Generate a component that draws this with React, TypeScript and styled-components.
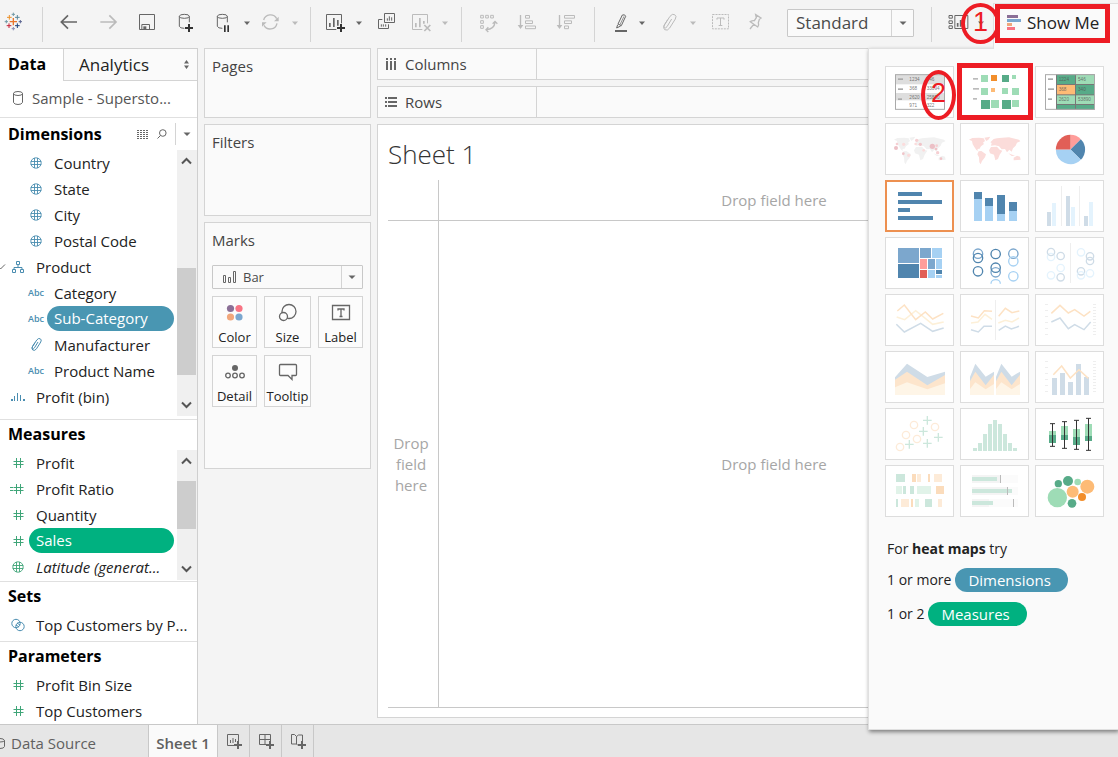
import React from "react";
import styled, { createGlobalStyle } from "styled-components";

const ink = "#666666";
const pale = "#bbbbbb";
const line = "#d4d4d4";
const teal = "#4a8db0";
const green = "#3fa578";
const pillBlue = "#4996b2";
const pillGreen = "#00b180";
const red = "#ed1c24";

const GlobalStyle = createGlobalStyle`
  *, *::before, *::after { box-sizing: border-box; }
  body {
    margin: 0;
    background: #f4f4f4;
    color: #222222;
    font-family: "Open Sans", "Noto Sans", sans-serif;
    font-size: 15px;
    font-weight: 400;
    line-height: 20px;
    overflow-x: hidden;
  }
  button, select { font: inherit; color: inherit; margin: 0; }
  button { background: none; border: 0; padding: 0; cursor: pointer; }
  h1, h2, ul, p { margin: 0; padding: 0; font-size: 15px; font-weight: inherit; }
  ul { list-style: none; }
  svg { display: block; flex: none; }
`;

/* ---------- page frame ---------- */

const Page = styled.div`
  display: flex;
  flex-direction: column;
  min-height: 100vh;
`;

const Toolbar = styled.header`
  position: relative;
  z-index: 2;
  display: flex;
  align-items: center;
  height: 48px;
`;

const Workspace = styled.main`
  position: relative;
  flex: 1;
  display: grid;
  grid-template-columns: 198px 167px minmax(0, 1fr);
  column-gap: 6px;
`;

/* ---------- toolbar ---------- */

const ToolGroup = styled.div<{ $gap: number; $start?: number; $end?: number }>`
  display: flex;
  align-items: center;
  gap: ${(p) => p.$gap}px;
  padding: 0 ${(p) => p.$end ?? 0}px 2px ${(p) => p.$start ?? 0}px;
`;

const Divider = styled.span`
  width: 1px;
  height: 35px;
  background: ${line};
`;

const ToolButton = styled.button<{ $gap?: number; $color?: string }>`
  display: flex;
  align-items: center;
  gap: ${(p) => p.$gap ?? 8}px;
  color: ${(p) => p.$color ?? ink};
`;

const SelectBox = styled.div`
  position: relative;
  width: 127px;
  margin: 0 17px 2px 20px;
  color: #4a4a4a;
`;

const SelectField = styled.select`
  display: block;
  appearance: none;
  width: 100%;
  height: 28px;
  padding: 0 30px 0 8px;
  border: 1px solid #c8c8c8;
  border-radius: 1px;
  background: #fafafa;
  font-size: 17px;
`;

const SelectCaret = styled.span<{ $w: number }>`
  position: absolute;
  top: 1px;
  right: 1px;
  bottom: 1px;
  width: ${(p) => p.$w}px;
  display: flex;
  align-items: center;
  justify-content: center;
  border-left: 1px solid ${line};
  color: ${ink};
  pointer-events: none;
`;

const ShowMeButton = styled.button`
  position: relative;
  align-self: flex-end;
  display: flex;
  align-items: center;
  gap: 5px;
  width: 125px;
  height: 46px;
  margin: 0 0 -1px auto;
  padding: 0 0 7px 13px;
  border: solid #e0e0e0;
  border-width: 1px 0 0 1px;
  background: #fafafa;
  font-size: 17px;
  white-space: nowrap;
`;

/* Red marks drawn over the interface */
const CalloutBox = styled.span<{ $inset: string }>`
  position: absolute;
  inset: ${(p) => p.$inset};
  border: 5px solid ${red};
  pointer-events: none;
`;

const CalloutRing = styled.span<{ $x: number; $y: number; $w: number; $h: number }>`
  position: absolute;
  z-index: 1;
  left: ${(p) => p.$x}px;
  top: ${(p) => p.$y}px;
  width: ${(p) => p.$w}px;
  height: ${(p) => p.$h}px;
  display: flex;
  align-items: center;
  justify-content: center;
  padding-bottom: 4px;
  border: 4px solid ${red};
  border-radius: 50%;
  color: ${red};
  font: 27px/30px "Liberation Sans", sans-serif;
  pointer-events: none;
`;

/* ---------- data pane ---------- */

const Sidebar = styled.aside`
  display: flex;
  flex-direction: column;
  border: solid #cfcfcf;
  border-width: 1px 1px 0 0;
  background: #ffffff;
`;

const TabRow = styled.div`
  display: flex;
  height: 32px;
`;

const DataTab = styled.button`
  width: 63px;
  padding: 0 0 2px 8px;
  text-align: left;
  font-size: 16px;
  font-weight: 700;
  color: #000000;
`;

const AnalyticsTab = styled.button`
  flex: 1;
  display: flex;
  align-items: center;
  justify-content: space-between;
  padding: 0 7px 0 15px;
  border: solid ${line};
  border-width: 0 0 1px 1px;
  background: #fafafa;
  font-size: 17px;
`;

const SourceRow = styled.button`
  display: flex;
  align-items: center;
  gap: 6px;
  height: 37px;
  padding: 0 0 2px 10px;
  border-bottom: 1px solid #e0e0e0;
  color: #555555;
`;

const Section = styled.section<{ $grow?: boolean }>`
  display: flex;
  flex-direction: column;
  flex: ${(p) => (p.$grow ? 1 : "none")};
  border-bottom: 1px solid #e0e0e0;
  &:last-child { border-bottom: 0; }
`;

const SectionHead = styled.div<{ $tall?: boolean }>`
  display: flex;
  align-items: center;
  height: ${(p) => (p.$tall ? 32 : 30)}px;
  padding: 0 0 ${(p) => (p.$tall ? 0 : 2)}px 8px;
`;

const SectionTitle = styled.h2`
  flex: 1;
  font-size: 16px;
  font-weight: 700;
  color: #000000;
`;

const HeadTools = styled.div`
  display: flex;
  align-items: center;
  gap: 8px;
  color: ${ink};
`;

const HeadMenu = styled.button`
  display: flex;
  align-items: center;
  justify-content: center;
  width: 22px;
  height: 22px;
  border-left: 1px solid ${line};
`;

const ListArea = styled.div<{ $end?: number; $grow?: boolean }>`
  display: flex;
  flex: ${(p) => (p.$grow ? 1 : "none")};
  margin-bottom: ${(p) => p.$end ?? 0}px;
`;

const FieldList = styled.ul`
  flex: 1;
  min-width: 0;
`;

const Field = styled.li<{ $level: number }>`
  position: relative;
  display: flex;
  align-items: center;
  height: 26px;
  padding-left: ${(p) => (p.$level === 2 ? 27 : 9)}px;
`;

const FieldIcon = styled.span<{ $tone: string }>`
  flex: none;
  display: flex;
  justify-content: center;
  width: 18px;
  color: ${(p) => p.$tone};
`;

const FieldName = styled.span`
  margin-left: 9px;
  white-space: nowrap;
`;

const ItalicName = styled(FieldName)`
  font-style: italic;
`;

const PillName = styled(FieldName)<{ $pill: string }>`
  flex: 1;
  align-self: flex-start;
  margin: 0 3px 0 2px;
  padding: 0 0 1px 7px;
  line-height: 24px;
  border-radius: 13px;
  background: ${(p) => p.$pill};
  color: #ffffff;
`;

const Twisty = styled.svg`
  position: absolute;
  left: 0;
  top: 10px;
`;

const Abc = styled.span`
  font: 600 9px/12px "Open Sans", sans-serif;
`;

const ScrollTrack = styled.div`
  display: flex;
  flex-direction: column;
  width: 20px;
  padding-right: 1px;
  background: #f0f0f0;
`;

const ScrollArrow = styled.button`
  display: flex;
  align-items: center;
  justify-content: center;
  height: 22px;
  color: #555555;
`;

const ScrollRail = styled.div<{ $before: number; $after: number }>`
  flex: 1;
  display: flex;
  padding: ${(p) => p.$before}px 0 ${(p) => p.$after}px;
`;

const ScrollThumb = styled.span`
  flex: 1;
  background: #cdcdcd;
`;

/* ---------- cards ---------- */

const CardColumn = styled.div`
  display: flex;
  flex-direction: column;
  gap: 6px;
`;

const Card = styled.section<{ $h: number }>`
  min-height: ${(p) => p.$h}px;
  padding: 7px;
  border: 1px solid ${line};
  background: #fafafa;
  color: #444444;
`;

const MarkSelect = styled.div`
  position: relative;
  margin: 15px 0 7px;
`;

const MarkSelectField = styled.select`
  display: block;
  appearance: none;
  width: 100%;
  height: 24px;
  padding: 0 24px 0 30px;
  border: 1px solid #c8c8c8;
  border-radius: 1px;
  background: #fafafa;
  color: #4a4a4a;
  font-size: 13px;
`;

const MarkSelectIcon = styled.svg`
  position: absolute;
  left: 11px;
  top: 5px;
  pointer-events: none;
`;

const MarkGrid = styled.div`
  display: grid;
  grid-template-columns: 45px 47px 45px;
  gap: 7px;
`;

const MarkButton = styled.button`
  display: flex;
  flex-direction: column;
  align-items: center;
  justify-content: space-between;
  height: 52px;
  padding: 6px 0 0;
  border: 1px solid ${line};
  background: #fcfcfc;
  font-size: 13px;
  color: #222222;
`;

/* ---------- shelves and sheet ---------- */

const Canvas = styled.div`
  display: flex;
  flex-direction: column;
  gap: 6px;
  padding-right: 8px;
  padding-bottom: 6px;
`;

const Shelf = styled.div`
  display: flex;
  height: 32px;
  border: 1px solid ${line};
  background: #fafafa;
`;

const ShelfLabel = styled.div`
  display: flex;
  align-items: center;
  gap: 8px;
  width: 159px;
  padding-left: 7px;
  border-right: 1px solid ${line};
  color: #444444;
`;

const Sheet = styled.section`
  flex: 1;
  display: flex;
  flex-direction: column;
  padding: 12px 0 9px 10px;
  border: 1px solid ${line};
  background: #ffffff;
`;

const SheetTitle = styled.h1`
  height: 43px;
  font-size: 26px;
  font-weight: 300;
  line-height: 34px;
  color: #333333;
`;

const DropGrid = styled.div`
  flex: 1;
  display: grid;
  grid-template-columns: 51px 1fr;
  grid-template-rows: 41px 1fr;
  border-bottom: 1px solid #c8c8c8;
`;

const DropCell = styled.div<{ $right?: boolean; $bottom?: boolean }>`
  display: flex;
  align-items: center;
  justify-content: center;
  padding-right: ${(p) => (p.$right ? 4 : 0)}px;
  border: solid #c8c8c8;
  border-width: 0 ${(p) => (p.$right ? 1 : 0)}px ${(p) => (p.$bottom ? 1 : 0)}px 0;
  color: #a6a6a6;
  font-size: 15px;
  line-height: 21px;
  text-align: center;
`;

/* ---------- show me panel ---------- */

const ShowMePanel = styled.aside`
  position: absolute;
  top: 0;
  right: 0;
  bottom: -6px;
  width: 250px;
  padding: 17px 14px 0 16px;
  border: 1px solid #e0e0e0;
  border-right: 0;
  background: #fafafa;
  box-shadow: 1px 2px 4px rgba(0, 0, 0, 0.45);
`;

const ChartGrid = styled.div`
  display: grid;
  grid-template-columns: repeat(3, 69px);
  gap: 5px 6px;
`;

const ChartTile = styled.button<{ $active?: boolean }>`
  position: relative;
  height: 52px;
  border: 1px solid #dddddd;
  background: #ffffff;
  outline: ${(p) => (p.$active ? "2px solid #ed9050" : "none")};
  outline-offset: -2px;
`;

const Hint = styled.p<{ $top?: number }>`
  display: flex;
  align-items: center;
  height: 24px;
  margin: ${(p) => p.$top ?? 10}px 0 0 2px;
  white-space: pre;
  font-size: 14px;
  strong { font-weight: 700; }
`;

const HintPill = styled.span<{ $color: string }>`
  margin-left: 4px;
  padding: 0 17px 0 13px;
  border-radius: 12px;
  background: ${(p) => p.$color};
  color: #ffffff;
  font-size: 15px;
  line-height: 24px;
`;

/* ---------- sheet tabs ---------- */

const SheetTabs = styled.nav`
  display: flex;
  height: 33px;
  border-top: 1px solid #c8c8c8;
  background: #e6e6e6;
`;

const SheetTab = styled.button<{ $w: number; $active?: boolean }>`
  display: flex;
  align-items: center;
  justify-content: ${(p) => (p.$w > 100 ? "flex-start" : "center")};
  gap: 5px;
  width: ${(p) => p.$w}px;
  padding-top: ${(p) => (p.$w > 40 ? 3 : 0)}px;
  border-right: 1px solid #c8c8c8;
  background: ${(p) => (p.$active ? "#fafafa" : "transparent")};
  color: #606060;
  font-weight: ${(p) => (p.$active ? 600 : 400)};
  white-space: nowrap;
`;

/* ---------- icons ---------- */

const Caret = ({ size = 6 }: { size?: number }) => (
  <svg width="8" height="8" viewBox="0 0 8 8">
    <path d={`M${4 - size / 2} 2.5h${size}L4 6z`} fill="currentColor" />
  </svg>
);

const ToolIcon = ({ children }: { children: React.ReactNode }) => (
  <svg width="24" height="24" viewBox="0 0 72 72" fill="none" stroke="currentColor" strokeWidth="3">
    {children}
  </svg>
);

const plus = (x: number, y: number, r: number) => `M${x - r} ${y}h${2 * r}M${x} ${y - r}v${2 * r}`;

const Logo = () => (
  <ToolIcon>
    <path d={plus(37, 32, 11)} stroke="#e8762d" strokeWidth="4" />
    <path d={plus(25, 19, 7)} stroke="#eb9129" />
    <path d={plus(49, 19, 7)} stroke="#5b879b" />
    <path d={plus(24, 44, 7)} stroke="#c72037" />
    <path d={plus(49, 44, 7)} stroke="#1f447e" />
    <path d={plus(16, 32, 5)} stroke="#7099a6" />
    <path d={plus(58, 32, 5)} stroke="#5c6692" />
    <path d={plus(37, 10, 5)} stroke="#7099a6" />
    <path d={plus(37, 53, 5)} stroke="#8a8fb5" />
  </ToolIcon>
);

const BackIcon = () => (
  <ToolIcon><path d="M60 33H14M33 13 13 33l20 20" strokeWidth="5" /></ToolIcon>
);
const ForwardIcon = () => (
  <ToolIcon><path d="M13 33h46M40 13l20 20-20 20" strokeWidth="5" /></ToolIcon>
);
const SaveIcon = () => (
  <ToolIcon>
    <path d="M13.500 10.500h45v45h-45zM20.500 55V40.500h23V55" />
    <path d="M25 46h9v9h-9z" fill="currentColor" stroke="none" />
  </ToolIcon>
);
const DbAddIcon = () => (
  <ToolIcon>
    <ellipse cx="31" cy="16" rx="15" ry="6" />
    <path d="M16 16v30q2 6 15 6M46 16v18" />
    <path d={plus(45, 51, 12)} stroke="#333" strokeWidth="6" />
  </ToolIcon>
);
const DbPauseIcon = () => (
  <ToolIcon>
    <ellipse cx="34" cy="16" rx="15" ry="6" />
    <path d="M19 16v30q2 6 15 6M49 16v18" />
    <path d="M41.500 43v20M51.500 43v20" stroke="#333" strokeWidth="5" />
  </ToolIcon>
);
const RefreshIcon = () => (
  <ToolIcon>
    <path d="M14 27A21 21 0 0 1 53 23M54 37A21 21 0 0 1 15 43" strokeWidth="4" />
    <path d="M59 17v14H45zM9 47V34h14z" fill="currentColor" stroke="none" />
  </ToolIcon>
);
const NewSheetIcon = () => (
  <ToolIcon>
    <path d="M40 55.500H10.500v-45h45V37" />
    <path d="M20.500 36v12M32.500 21v27M44.500 27v17" strokeWidth="5" />
    <path d={plus(54, 51, 12)} stroke="#333" strokeWidth="6" />
  </ToolIcon>
);
const DuplicateIcon = () => (
  <ToolIcon>
    <path d="M31.500 7.500h30v27h-30zM25 25.500H13.500v27h30V40" />
    <path d="M40 29v-7M46 29V16M53 29V19M22 47v-7M28 47v-7M35 47v-7" />
  </ToolIcon>
);
const ClearIcon = () => (
  <ToolIcon>
    <path d="M40 55.500H10.500v-45h45V37" />
    <path d="M20.500 36v13M32.500 21v28M44.500 30v8" strokeWidth="5" />
    <path d="m46 42 18 18M64 42 46 60" strokeWidth="5" />
  </ToolIcon>
);
const SwapIcon = () => (
  <ToolIcon>
    <path d="M14 13h8v8h-8zM29 13h8v8h-8zM44 13h8v8h-8zM14 29h8v8h-8zM14 44h8v8h-8z" />
    <path d="M57 34q-2 20-26 22M50 38l7-7 7 7M37 49l-7 7 7 7" strokeWidth="4" />
  </ToolIcon>
);
const SortAscIcon = () => (
  <ToolIcon>
    <path d="M16.500 12v36" strokeWidth="4" />
    <path d="M31.500 13.500h12v8h-12zM31.500 29.500h21v8h-21zM31.500 45h30v8h-30z" />
    <path d="M8 42h17l-8.500 12z" fill="currentColor" stroke="none" />
  </ToolIcon>
);
const SortDescIcon = () => (
  <ToolIcon>
    <path d="M16.500 12v36" strokeWidth="4" />
    <path d="M31.500 13.500h30v8h-30zM31.500 29.500h21v8h-21zM31.500 45h12v8h-12z" />
    <path d="M8 42h17l-8.500 12z" fill="currentColor" stroke="none" />
  </ToolIcon>
);
const HighlightIcon = () => (
  <ToolIcon>
    <path d="M37 12q8-3 10 4L34 44l-10-5zM23 41l-3 10 12-6" />
    <path d="M42 16 30 41" strokeWidth="2" />
    <path d="M15 60h36" strokeWidth="6" />
  </ToolIcon>
);
const TextIcon = () => (
  <ToolIcon>
    <path d="M13.500 10.500h48v43h-48z" strokeDasharray="6 3" />
    <path d="M27 26v-5h21v5M37.500 21v22M32 43.500h11" />
  </ToolIcon>
);
const PinIcon = () => (
  <ToolIcon>
    <path d="m38 11 16 10-5 4-3 10q3 8-2 13L22 32q6-4 12-3l6-9zM32 40 21 54" strokeWidth="4" />
  </ToolIcon>
);
const PresentIcon = () => (
  <ToolIcon>
    <path d="M12 13.500h10v8H12zM12 29.500h10v8H12zM12 44.500h10v8H12zM29.500 13.500h39v39h-39z" />
    <path d="M38 47V36M47 47V27M57 47V31" strokeWidth="5" />
  </ToolIcon>
);

const ClipIcon = ({ size, stroke = 4 }: { size: number; stroke?: number }) => (
  <svg width={size} height={size} viewBox="0 0 72 72" fill="none" stroke="currentColor" strokeWidth={stroke}>
    <path d="m44 24-14 23q-4 6-8 3-3-3 0-8l17-26q7-9 14-5 7 4 2 13L38 51q-7 10-15 5-6-5-1-14l10-16" />
  </svg>
);

const ShowMeIcon = () => (
  <svg width="15" height="16" viewBox="0 0 15 16">
    <path d="M0 0h11v3H0z" fill="#8b6f96" />
    <path d="M0 4h14v3H0z" fill="#7ba7cf" />
    <path d="M0 8h5v3H0z" fill="#f1a77c" />
    <path d="M0 12h8v3H0z" fill="#f87484" />
  </svg>
);

const Cylinder = () => (
  <svg width="16" height="16" viewBox="0 0 16 16" fill="none" stroke={ink}>
    <ellipse cx="8" cy="3.500" rx="4.500" ry="2" />
    <path d="M3.500 3.500v9q1 2 4.500 2t4.500-2v-9" />
  </svg>
);

const Globe = () => (
  <svg width="12" height="12" viewBox="0 0 12 12" fill="none" stroke="currentColor" strokeWidth="0.900">
    <circle cx="6" cy="6" r="5.200" />
    <path d="M.8 4.500h10.400M.8 7.500h10.400" />
    <path d="M4.500 1v10M7.500 1v10" />
  </svg>
);
const Hash = ({ calc }: { calc?: boolean }) => (
  <svg width="16" height="12" viewBox="0 0 16 12" fill="none" stroke="currentColor">
    <path d="M6.500 1v10M10.500 1v10M3.500 4.500h10M3.500 7.500h10" />
    {calc && <path d="M0 4.500h3M0 7.500h3" />}
  </svg>
);
const Hierarchy = () => (
  <svg width="12" height="12" viewBox="0 0 12 12" fill="none" stroke="currentColor">
    <path d="M4.500 .5h3v3h-3zM.5 8.500h3v3h-3zM8.500 8.500h3v3h-3zM6 4v2M2 8.500V6.500h8v2" />
  </svg>
);
const Bins = () => (
  <svg width="14" height="10" viewBox="0 0 14 10" fill="currentColor">
    <path d="M0 7h2v2H0zM3 4h1v5H3zM6 1h1v8H6zM9 3h1v6H9zM12 7h2v2h-2z" />
  </svg>
);
const Rings = () => (
  <svg width="14" height="14" viewBox="0 0 14 14" fill="none" stroke="currentColor">
    <circle cx="5" cy="5.500" r="4.200" />
    <circle cx="9" cy="8.500" r="4.200" />
    <path d="m5 7 3 2M6 5l3 2" />
  </svg>
);

const Chevron = ({ up }: { up?: boolean }) => (
  <svg width="11" height="8" viewBox="0 0 11 8" fill="none" stroke="currentColor" strokeWidth="2">
    <path d={up ? "M1 6.500 5.500 2 10 6.500" : "M1 1.500 5.500 6 10 1.500"} />
  </svg>
);

/* ---------- chart thumbnails (3 units per pixel) ---------- */

type Box = [number, number, number, number, string];
const Boxes = ({ of }: { of: Box[] }) => (
  <>{of.map(([x, y, w, h, c], i) => <rect key={i} x={x} y={y} width={w} height={h} fill={c} />)}</>
);
type Dot = [number, number, number, string];
const Dots = ({ of, stroke }: { of: Dot[]; stroke?: number }) => (
  <>
    {of.map(([x, y, r, c], i) => (
      <circle key={i} cx={x} cy={y} r={r} fill={stroke ? "none" : c} stroke={stroke ? c : "none"} strokeWidth={stroke} />
    ))}
  </>
);
const Lines = ({ of, width = 4.5 }: { of: [string, string][]; width?: number }) => (
  <>{of.map(([d, c], i) => <polyline key={i} points={d} fill="none" stroke={c} strokeWidth={width} />)}</>
);
const Areas = ({ of }: { of: [string, string][] }) => (
  <>{of.map(([d, c], i) => <polygon key={i} points={d} fill={c} />)}</>
);
const Words = ({ of }: { of: [number, number, string][] }) => (
  <g fontFamily="Liberation Sans, sans-serif" fontSize="14" fill="#555" fillOpacity="0.8">
    {of.map(([x, y, t], i) => <text key={i} x={x} y={y}>{t}</text>)}
  </g>
);

const G = "#9edcb6", D = "#57ab88", O = "#f28e2b", P = "#fdbb76";
const B1 = "#5085ae", B2 = "#7ca7cd", B3 = "#a6d1f3";
const F1 = "#cfdce7", F2 = "#e4f3fd", FO = "#fde2c4", FY = "#fdf0d8", FG = "#cce7dc", FL = "#e1f3e9", F0 = "#eeeeee";
const W1 = "#fdebd8", W2 = "#fbdcbc";

const world =
  "M0 9l10-5 20-1 14 2 4 8-6 5 3 4-9 7-5 8-4-1-2 4 5 5 6 2-4-1-10-6-6-9-5-8-2-10zM46 3l18-3-6 9-6 4zM29 44l8-1 14 10-3 9-9 11-4 10-4-6-1-15-5-9zM66 31l18-1 8 9 8 3-8 12-5 13-8 4-4-17-12-4-3-9zM66 27l2-8-4-2 10-10 10-2 16-2 20-1 30 7 4 5-10 4-4 9-8 8-4 10-7-6-7 8-6-10-10 1-8-9-12-3zM134 63l10-6 9 3 2 9-9 1-12 1zM118 50l12 4 8 4-10 0z";

const ticks = (x: number, from: number, step: number, n: number): Box[] =>
  Array.from({ length: n }, (_, i) => [x, from + i * step, 9, 3, F0]);

const thumbs: { name: string; art: React.ReactNode }[] = [
  {
    name: "Text table",
    art: (
      <>
        <Boxes of={[[28, 23, 147, 29, "#dedede"], [28, 78, 147, 22, "#dedede"], [36, 34, 15, 5, "#aaa"], [36, 64, 15, 5, "#aaa"], [36, 94, 12, 5, "#aaa"]]} />
        <rect x="28.500" y="23" width="147" height="104" fill="none" stroke="#aaa" strokeWidth="3" />
        <Words of={[[70, 43, "1234"], [122, 43, "546"], [70, 70, "368"], [122, 70, "33094"], [70, 97, "2620"], [122, 97, "25890"], [70, 121, "971"], [122, 121, "322"]]} />
      </>
    ),
  },
  {
    name: "Heat map",
    art: (
      <Boxes
        of={[
          [36, 33, 15, 5, "#bbb"], [36, 63, 18, 5, "#bbb"], [36, 93, 12, 5, "#bbb"],
          [60, 24, 21, 21, G], [90, 24, 18, 18, O], [123, 24, 21, 21, D], [153, 24, 12, 12, G],
          [60, 63, 21, 21, G], [90, 63, 12, 12, P], [123, 63, 18, 18, G], [153, 63, 21, 21, G],
          [60, 99, 27, 27, D], [90, 99, 24, 24, G], [123, 99, 27, 27, D], [153, 99, 21, 21, G],
        ]}
      />
    ),
  },
  {
    name: "Highlight table",
    art: (
      <>
        <Boxes
          of={[
            [60, 22, 116, 106, "#777"],
            [63, 24, 54, 27, D], [120, 24, 54, 27, G], [63, 54, 54, 28, P], [120, 54, 54, 28, D],
            [63, 85, 54, 26, G], [120, 85, 54, 26, G], [63, 114, 54, 13, D], [120, 114, 54, 13, D],
            [36, 34, 15, 5, "#aaa"], [36, 64, 18, 5, "#aaa"], [36, 94, 12, 5, "#aaa"],
          ]}
        />
        <rect x="28.500" y="23" width="147" height="104" fill="none" stroke="#aaa" strokeWidth="3" />
        <Words of={[[68, 42, "1224"], [126, 42, "546"], [68, 73, "368"], [126, 73, "340"], [68, 103, "2620"], [126, 103, "53890"]]} />
      </>
    ),
  },
  {
    name: "Symbol map",
    art: (
      <>
        <path d={world} transform="translate(24 38)" fill="#f1f1f1" />
        <Dots
          of={[
            [30, 72, 6, "#ecc0c6"], [33, 60, 4, "#f6cfd2"], [53, 61, 5, "#fbdcdc"], [92, 49, 5, "#f6cfd2"],
            [89, 60, 4, "#fbdcdc"], [103, 61, 5, "#f0c4c8"], [113, 79, 4, "#fbdcdc"], [139, 67, 8, "#ecc0c6"],
            [150, 75, 4, "#f0c4c8"], [155, 86, 5, "#f6cfd2"], [165, 104, 4, "#f0c4c8"], [52, 89, 4, "#f0c4c8"],
            [68, 94, 5, "#fbdcdc"], [152, 65, 4, "#f6cfd2"],
          ]}
        />
      </>
    ),
  },
  { name: "Map", art: <path d={world} transform="translate(24 38)" fill="#fbdcda" /> },
  {
    name: "Pie chart",
    art: (
      <g transform="translate(103.500 76.500)">
        <path d="M0 0V-44A44 44 0 0 1 31-31z" fill="#ff9d9a" />
        <path d="M0 0 31-31A44 44 0 0 1 31 31z" fill={B1} />
        <path d="M0 0 31 31A44 44 0 0 1-44 0z" fill={B3} />
        <path d="M0 0H-44A44 44 0 0 1 0-44z" fill="#e15f57" />
      </g>
    ),
  },
  { name: "Horizontal bars", art: <Boxes of={[[36, 33, 72, 12, B1], [36, 57, 132, 12, B1], [36, 81, 36, 12, B1], [36, 105, 105, 12, B1]]} /> },
  {
    name: "Stacked bars",
    art: (
      <Boxes
        of={[
          [39, 33, 24, 87, B3], [72, 51, 24, 69, B3], [108, 42, 24, 78, B3], [144, 63, 24, 57, B3],
          [39, 33, 24, 21, B1], [72, 51, 24, 24, B1], [108, 42, 24, 57, B1], [144, 63, 24, 27, B1],
        ]}
      />
    ),
  },
  {
    name: "Side-by-side bars",
    art: (
      <Boxes
        of={[
          [33, 93, 12, 42, F1], [90, 45, 12, 90, F1], [144, 105, 12, 30, F1],
          [48, 66, 12, 69, F2], [105, 78, 12, 57, F2], [159, 63, 12, 72, F2],
          [75, 15, 3, 120, F0], [129, 15, 3, 120, F0],
        ]}
      />
    ),
  },
  {
    name: "Treemap",
    art: (
      <Boxes
        of={[
          [36, 30, 63, 45, B2], [36, 78, 63, 42, B1], [102, 30, 33, 30, B2], [138, 30, 30, 30, B3],
          [102, 63, 21, 30, "#ff9d9a"], [126, 63, 21, 30, B2], [150, 63, 18, 30, B3],
          [102, 96, 21, 24, "#e15f57"], [126, 96, 21, 24, B3], [150, 96, 18, 12, B1], [150, 111, 18, 9, B3],
        ]}
      />
    ),
  },
  {
    name: "Circle views",
    art: (
      <>
        <Dots
          stroke={4}
          of={[
            [51, 47, 14, B2], [51, 60, 14, B1], [51, 100, 14, B1], [104, 48, 14, B1], [104, 103, 14, B2],
            [104, 89, 14, B1], [157, 47, 14, B2], [157, 70, 14, B3], [157, 115, 14, B3],
          ]}
        />
        <path d="M90 137a14 12 0 0 1 28 0" fill="none" stroke={B3} strokeWidth="4" />
      </>
    ),
  },
  {
    name: "Side-by-side circles",
    art: (
      <>
        <Dots
          stroke={4}
          of={[
            [45, 57, 11, F2], [45, 42, 11, F1], [74, 54, 11, F1], [74, 90, 11, F2], [45, 112, 11, F2], [74, 118, 11, F1],
            [135, 43, 11, F2], [162, 55, 11, F1], [162, 69, 11, F1], [135, 100, 11, F1], [135, 112, 11, F2], [162, 106, 11, F2],
          ]}
        />
        <Boxes of={[[102, 15, 3, 120, F0]]} />
      </>
    ),
  },
  {
    name: "Lines, continuous",
    art: (
      <Lines
        of={[
          ["32,66 56,74 89,47 118,70 140,88 173,81", FY],
          ["34,48 55,30 89,74 118,51 140,72 172,55", FO],
          ["31,88 55,111 104,85 140,109 173,99", F1],
        ]}
      />
    ),
  },
  {
    name: "Lines, discrete",
    art: (
      <>
        <Lines
          of={[
            ["30,63 52,69 70,47 93,49", FO], ["30,84 51,81 72,58 93,73", FY], ["30,104 52,111 69,94 93,94", F1],
            ["113,64 133,40 153,53 175,48", FO], ["112,84 133,76 153,81 174,69", FY], ["113,106 133,93 151,102 174,94", F1],
          ]}
        />
        <Boxes of={[[102, 15, 3, 120, F0]]} />
      </>
    ),
  },
  {
    name: "Dual lines",
    art: (
      <>
        <Lines
          of={[
            ["46,55 72,31 97,54 116,44 144,63 163,49", FO],
            ["46,81 72,69 97,101 116,89 144,104 164,81", F1],
          ]}
        />
        <Boxes of={[...ticks(27, 27, 18, 6), ...ticks(171, 27, 9, 11)]} />
      </>
    ),
  },
  {
    name: "Area, continuous",
    art: (
      <Areas
        of={[
          ["27,76 63,35 124,75 177,59 177,129 27,129", F1],
          ["27,83 63,59 124,100 177,69 177,129 27,129", "#fde5cc"],
          ["27,106 63,91 124,112 177,94 177,129 27,129", "#fef5e7"],
        ]}
      />
    ),
  },
  {
    name: "Area, discrete",
    art: (
      <>
        {[0, 78].map((dx) => (
          <g key={dx} transform={`translate(${dx})`}>
            <Areas
              of={[
                ["27,75 43,35 74,74 99,59 99,129 27,129", F1],
                ["27,88 43,59 74,100 99,68 99,129 27,129", "#fde5cc"],
                ["27,111 43,91 74,112 99,96 99,129 27,129", "#fef5e7"],
              ]}
            />
          </g>
        ))}
      </>
    ),
  },
  {
    name: "Dual combination",
    art: (
      <>
        <Boxes
          of={[
            [48, 78, 15, 51, F1], [72, 63, 15, 66, F1], [96, 90, 15, 39, F1], [120, 36, 15, 93, F1], [144, 75, 15, 54, F1],
            ...ticks(27, 27, 18, 6), ...ticks(171, 27, 9, 11),
          ]}
        />
        <Lines of={[["52,68 77,42 103,78 129,53 157,79", FO]]} />
      </>
    ),
  },
  {
    name: "Scatter plot",
    art: (
      <>
        <Dots stroke={4} of={[[84, 48, 11, W1], [147, 54, 11, W1], [60, 78, 11, W1], [93, 90, 11, W1], [42, 114, 11, W1]]} />
        <path
          d={[plus(124, 34, 13), plus(112, 67, 13), plus(157, 85, 13), plus(70, 106, 13), plus(124, 103, 13)].join("")}
          stroke={FG}
          strokeWidth="4"
        />
      </>
    ),
  },
  {
    name: "Histogram",
    art: <Boxes of={[9, 24, 51, 81, 93, 81, 51, 24, 9].map((h, i): Box => [36 + i * 15, 126 - h, 12, h, FG])} />,
  },
  {
    name: "Box-and-whisker plot",
    art: (
      <>
        {[
          [39, 66, 78, 102, 44, 112],
          [75, 51, 78, 93, 38, 118],
          [111, 60, 84, 108, 34, 121],
          [147, 45, 81, 96, 28, 124],
        ].map(([x, a, b, c, lo, hi]) => (
          <g key={x}>
            <Boxes of={[[x, a, 21, b - a, G], [x, b, 21, c - b, D]]} />
            <path d={`M${x + 3} ${lo}h15M${x + 3} ${hi}h15M${x + 10.5} ${lo}V${hi}`} stroke="#333" strokeWidth="3" />
          </g>
        ))}
      </>
    ),
  },
  {
    name: "Gantt chart",
    art: (
      <Boxes
        of={[
          [30, 24, 27, 24, FG], [78, 24, 12, 24, W2], [93, 24, 12, 24, W1], [126, 24, 6, 24, W2], [144, 24, 24, 24, W1],
          [30, 60, 18, 24, FL], [51, 60, 9, 24, FG], [72, 60, 12, 24, FG], [93, 60, 42, 24, FL], [150, 60, 24, 24, W2],
          [30, 99, 6, 24, FG], [45, 99, 24, 24, W1], [75, 99, 6, 24, W2], [87, 99, 12, 24, FL], [117, 99, 21, 24, FG], [156, 99, 12, 24, W1],
        ]}
      />
    ),
  },
  {
    name: "Bullet graph",
    art: (
      <Boxes
        of={[
          [33, 27, 138, 24, "#fbfbfb"], [33, 63, 138, 24, "#fbfbfb"], [33, 99, 138, 24, "#fbfbfb"],
          [33, 27, 84, 24, "#f4f4f4"], [33, 63, 105, 24, "#f4f4f4"], [33, 99, 51, 24, "#f4f4f4"],
          [33, 33, 75, 12, FG], [33, 69, 120, 12, FG], [33, 105, 63, 12, FG],
          [117, 27, 3, 24, "#bbb"], [138, 63, 3, 24, "#bbb"], [156, 99, 3, 24, "#bbb"],
        ]}
      />
    ),
  },
  {
    name: "Packed bubbles",
    art: (
      <Dots
        of={[
          [67, 53, 11, D], [96, 45, 15, D], [125, 48, 10, G], [64, 95, 29, G],
          [110, 77, 18, P], [154, 62, 21, P], [138, 93, 12, O], [108, 112, 13, D],
        ]}
      />
    ),
  },
];

/* ---------- data ---------- */

type FieldRow = { name: string; icon: React.ReactNode; level?: number; pill?: string; italic?: boolean; open?: boolean };

const dimensions: FieldRow[] = [
  { name: "Country", icon: <Globe />, level: 2 },
  { name: "State", icon: <Globe />, level: 2 },
  { name: "City", icon: <Globe />, level: 2 },
  { name: "Postal Code", icon: <Globe />, level: 2 },
  { name: "Product", icon: <Hierarchy />, open: true },
  { name: "Category", icon: <Abc>Abc</Abc>, level: 2 },
  { name: "Sub-Category", icon: <Abc>Abc</Abc>, level: 2, pill: pillBlue },
  { name: "Manufacturer", icon: <ClipIcon size={18} stroke={4} />, level: 2 },
  { name: "Product Name", icon: <Abc>Abc</Abc>, level: 2 },
  { name: "Profit (bin)", icon: <Bins /> },
];
const measures: FieldRow[] = [
  { name: "Profit", icon: <Hash /> },
  { name: "Profit Ratio", icon: <Hash calc /> },
  { name: "Quantity", icon: <Hash /> },
  { name: "Sales", icon: <Hash />, pill: pillGreen },
  { name: "Latitude (generat...", icon: <Globe />, italic: true },
];
const sets: FieldRow[] = [{ name: "Top Customers by P...", icon: <Rings /> }];
const parameters: FieldRow[] = [
  { name: "Profit Bin Size", icon: <Hash /> },
  { name: "Top Customers", icon: <Hash /> },
];

const Fields = ({ rows, tone }: { rows: FieldRow[]; tone: string }) => (
  <FieldList>
    {rows.map((f) => (
      <Field key={f.name} $level={f.level ?? 1}>
        {f.open && (
          <Twisty width="6" height="6" viewBox="0 0 6 6" fill="none" stroke={ink}>
            <path d="M-2 2 .5 5 5 .5" />
          </Twisty>
        )}
        <FieldIcon $tone={tone}>{f.icon}</FieldIcon>
        {f.pill ? (
          <PillName $pill={f.pill}>{f.name}</PillName>
        ) : f.italic ? (
          <ItalicName>{f.name}</ItalicName>
        ) : (
          <FieldName>{f.name}</FieldName>
        )}
      </Field>
    ))}
  </FieldList>
);

const Scroller = ({ before, after }: { before: number; after: number }) => (
  <ScrollTrack>
    <ScrollArrow aria-label="Scroll up"><Chevron up /></ScrollArrow>
    <ScrollRail $before={before} $after={after}><ScrollThumb /></ScrollRail>
    <ScrollArrow aria-label="Scroll down"><Chevron /></ScrollArrow>
  </ScrollTrack>
);

const TopBar = () => (
  <Toolbar>
    <ToolGroup $gap={0} $start={1} $end={17}>
      <ToolButton aria-label="Start page"><Logo /></ToolButton>
    </ToolGroup>
    <Divider />
    <ToolGroup $gap={15} $start={14}>
      <ToolButton aria-label="Undo"><BackIcon /></ToolButton>
      <ToolButton aria-label="Redo" $color={pale}><ForwardIcon /></ToolButton>
      <ToolButton aria-label="Save"><SaveIcon /></ToolButton>
      <ToolButton aria-label="New data source"><DbAddIcon /></ToolButton>
    </ToolGroup>
    <ToolGroup $gap={8} $start={13} $end={11}>
      <ToolButton aria-label="Pause updates"><DbPauseIcon /><Caret /></ToolButton>
      <ToolButton aria-label="Refresh" $color={pale}><RefreshIcon /><Caret /></ToolButton>
    </ToolGroup>
    <Divider />
    <ToolGroup $gap={11} $start={12} $end={12}>
      <ToolButton aria-label="New worksheet"><NewSheetIcon /><Caret /></ToolButton>
      <ToolButton aria-label="Duplicate"><DuplicateIcon /></ToolButton>
      <ToolButton aria-label="Clear sheet" $color={pale}><ClearIcon /><Caret /></ToolButton>
    </ToolGroup>
    <Divider />
    <ToolGroup $gap={15} $start={14} $end={16}>
      <ToolButton aria-label="Swap rows and columns" $color={pale}><SwapIcon /></ToolButton>
      <ToolButton aria-label="Sort ascending" $color={pale}><SortAscIcon /></ToolButton>
      <ToolButton aria-label="Sort descending" $color={pale}><SortDescIcon /></ToolButton>
    </ToolGroup>
    <Divider />
    <ToolGroup $gap={11} $start={15}>
      <ToolButton aria-label="Highlight" $gap={4}><HighlightIcon /><Caret /></ToolButton>
      <ToolButton aria-label="Group members" $color={pale}><ClipIcon size={24} stroke={3} /><Caret /></ToolButton>
      <ToolButton aria-label="Show mark labels" $color={pale}><TextIcon /></ToolButton>
      <ToolButton aria-label="Fix axes" $color={pale}><PinIcon /></ToolButton>
    </ToolGroup>
    <SelectBox>
      <SelectField aria-label="Fit" defaultValue="Standard">
        <option>Standard</option>
        <option>Entire View</option>
      </SelectField>
      <SelectCaret $w={22}><Caret size={7} /></SelectCaret>
    </SelectBox>
    <Divider />
    <ToolGroup $gap={0} $start={13}>
      <ToolButton aria-label="Show or hide cards"><PresentIcon /><Caret /></ToolButton>
    </ToolGroup>
    <ShowMeButton>
      <ShowMeIcon />
      Show Me
      <CalloutBox $inset="0 8px 6px 1px" />
      <CalloutRing $x={-33} $y={-1} $w={39} $h={41}>1</CalloutRing>
    </ShowMeButton>
  </Toolbar>
);

const DataPane = () => (
  <Sidebar>
    <TabRow>
      <DataTab>Data</DataTab>
      <AnalyticsTab>
        Analytics
        <svg width="7" height="9" viewBox="0 0 7 9" fill={ink}>
          <path d="M3.500 0 6 3.500H1zM3.500 9 1 5.500h5z" />
        </svg>
      </AnalyticsTab>
    </TabRow>
    <SourceRow><Cylinder />Sample - Supersto...</SourceRow>
    <Section $grow>
      <SectionHead $tall>
        <SectionTitle>Dimensions</SectionTitle>
        <HeadTools>
          <ToolButton aria-label="View data">
            <svg width="12" height="9" viewBox="0 0 12 9" stroke="currentColor">
              <path d="M0 .5h12M0 2.500h12M0 4.500h12M0 6.500h12M0 8.500h12" strokeDasharray="2 1" />
            </svg>
          </ToolButton>
          <ToolButton aria-label="Find field">
            <svg width="10" height="10" viewBox="0 0 10 10" fill="none" stroke="currentColor">
              <circle cx="5.800" cy="4" r="3.300" />
              <path d="M3.500 6.500.5 9.500" />
            </svg>
          </ToolButton>
          <HeadMenu aria-label="Dimensions menu"><Caret size={7} /></HeadMenu>
        </HeadTools>
      </SectionHead>
      <ListArea $end={3} $grow>
        <Fields rows={dimensions} tone={teal} />
        <Scroller before={96} after={19} />
      </ListArea>
    </Section>
    <Section>
      <SectionHead><SectionTitle>Measures</SectionTitle></SectionHead>
      <ListArea $end={1}>
        <Fields rows={measures} tone={green} />
        <Scroller before={9} after={29} />
      </ListArea>
    </Section>
    <Section>
      <SectionHead><SectionTitle>Sets</SectionTitle></SectionHead>
      <ListArea $end={3}>
        <Fields rows={sets} tone={teal} />
      </ListArea>
    </Section>
    <Section>
      <SectionHead><SectionTitle>Parameters</SectionTitle></SectionHead>
      <Fields rows={parameters} tone={green} />
    </Section>
  </Sidebar>
);

const MarkIcon = ({ children }: { children: React.ReactNode }) => (
  <svg width="20" height="20" viewBox="0 0 20 20" fill="none" stroke={ink} strokeWidth="1.300">{children}</svg>
);

const Cards = () => (
  <CardColumn>
    <Card $h={70}><h2>Pages</h2></Card>
    <Card $h={92}><h2>Filters</h2></Card>
    <Card $h={247}>
      <h2>Marks</h2>
      <MarkSelect>
        <MarkSelectField aria-label="Mark type" defaultValue="Bar">
          <option>Bar</option>
          <option>Line</option>
        </MarkSelectField>
        <MarkSelectIcon width="14" height="14" viewBox="0 0 14 14" fill="none" stroke={ink}>
          <path d="M.5 5.500h2v7h-2zM5.500 7.500h2v5h-2zM10.500 1.500h2v11h-2z" />
        </MarkSelectIcon>
        <SelectCaret $w={21}><Caret size={7} /></SelectCaret>
      </MarkSelect>
      <MarkGrid>
        <MarkButton>
          <MarkIcon>
            <Dots of={[[5.5, 5.5, 3.6, "#8b6f96"], [14, 5.5, 3.6, "#f87484"], [5.5, 14, 3.6, "#f1a77c"], [14, 14, 3.6, "#7ba7cf"]]} />
          </MarkIcon>
          Color
        </MarkButton>
        <MarkButton>
          <MarkIcon>
            <circle cx="11" cy="8.500" r="7" />
            <circle cx="5.500" cy="13.500" r="4" fill="#fcfcfc" />
          </MarkIcon>
          Size
        </MarkButton>
        <MarkButton>
          <MarkIcon>
            <path d="M1.500 2.500h17v14h-17zM7 7.500V6h6v1.500M10 6v7.500M8.500 13.500h3" />
          </MarkIcon>
          Label
        </MarkButton>
        <MarkButton>
          <MarkIcon>
            <circle cx="10" cy="6" r="3" fill={ink} stroke="none" />
            <circle cx="3" cy="13.500" r="2.300" />
            <circle cx="10" cy="13.500" r="2.300" />
            <circle cx="17" cy="13.500" r="2.300" />
          </MarkIcon>
          Detail
        </MarkButton>
        <MarkButton>
          <MarkIcon>
            <path d="M2.500 2.500h15q1 0 1 1v9q0 1-1 1H14v4l-4-4H2.500q-1 0-1-1v-9q0-1 1-1z" />
          </MarkIcon>
          Tooltip
        </MarkButton>
      </MarkGrid>
    </Card>
  </CardColumn>
);

export default function App() {
  return (
    <Page>
      <GlobalStyle />
      <TopBar />
      <Workspace>
        <DataPane />
        <Cards />
        <Canvas>
          <Shelf>
            <ShelfLabel>
              <svg width="12" height="12" viewBox="0 0 12 12" fill={ink}>
                <path d="M1 0h2v2H1zM5 0h2v2H5zM9 0h2v2H9zM1 3h2v9H1zM5 3h2v9H5zM9 3h2v9H9z" />
              </svg>
              Columns
            </ShelfLabel>
          </Shelf>
          <Shelf>
            <ShelfLabel>
              <svg width="12" height="12" viewBox="0 0 12 12" fill={ink}>
                <path d="M0 1h2v2H0zM0 5h2v2H0zM0 9h2v2H0zM3 1h9v2H3zM3 5h9v2H3zM3 9h9v2H3z" />
              </svg>
              Rows
            </ShelfLabel>
          </Shelf>
          <Sheet>
            <SheetTitle>Sheet 1</SheetTitle>
            <DropGrid>
              <DropCell $right $bottom />
              <DropCell $bottom>Drop field here</DropCell>
              <DropCell $right>Drop field here</DropCell>
              <DropCell>Drop field here</DropCell>
            </DropGrid>
          </Sheet>
        </Canvas>
        <ShowMePanel>
          <ChartGrid>
            {thumbs.map((t, i) => (
              <ChartTile key={t.name} aria-label={t.name} $active={t.name === "Horizontal bars"}>
                <svg width="67" height="50" viewBox="0 0 201 150">{t.art}</svg>
                {i === 0 && <CalloutRing $x={35} $y={3} $w={35} $h={50}>2</CalloutRing>}
                {i === 1 && <CalloutBox $inset="-4px -5px -3px -4px" />}
              </ChartTile>
            ))}
          </ChartGrid>
          <Hint $top={20}>For <strong>heat maps</strong> try</Hint>
          <Hint $top={7}>1 or more<HintPill $color={pillBlue}>Dimensions</HintPill></Hint>
          <Hint>1 or 2<HintPill $color={pillGreen}>Measures</HintPill></Hint>
        </ShowMePanel>
      </Workspace>
      <SheetTabs>
        <SheetTab $w={149}>
          <svg width="6" height="12" viewBox="0 0 6 12" fill="none" stroke={ink}>
            <path d="M0 1.500q4 0 4.500 2v6q-.5 2-4.500 2M4.500 3.500q-.5 1.500-4.500 1.500" />
          </svg>
          Data Source
        </SheetTab>
        <SheetTab $w={69} $active>Sheet 1</SheetTab>
        <SheetTab $w={32} aria-label="New worksheet">
          <svg width="16" height="16" viewBox="0 0 16 16" fill="none" stroke={ink}>
            <path d="M8 12.500H1.500v-11h11V8M4.500 7v3M7 5v5M9.500 6v3" />
            <path d={plus(12, 12, 4)} strokeWidth="2" />
          </svg>
        </SheetTab>
        <SheetTab $w={32} aria-label="New dashboard">
          <svg width="16" height="16" viewBox="0 0 16 16" fill="none" stroke={ink}>
            <path d="M8 11.500H1.500v-10h11V8M1.500 6.500h11M7 1.500v10" />
            <path d={plus(12, 12, 4)} strokeWidth="2" />
          </svg>
        </SheetTab>
        <SheetTab $w={32} aria-label="New story">
          <svg width="16" height="16" viewBox="0 0 16 16" fill="none" stroke={ink}>
            <path d="M8 12.500 6.500 11H1.500V1.500h3l2 2V11M6.500 3.500l2-1.500h4v6" />
            <path d={plus(12, 12, 4)} strokeWidth="2" />
          </svg>
        </SheetTab>
      </SheetTabs>
    </Page>
  );
}
